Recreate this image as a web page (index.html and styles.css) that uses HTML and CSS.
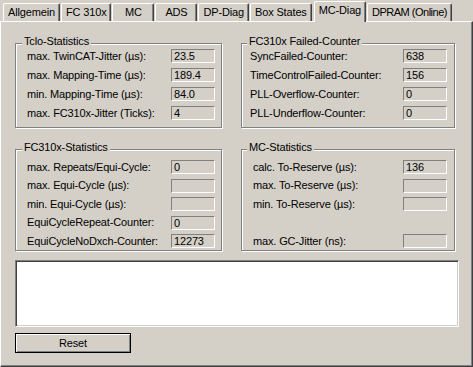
FILE: index.html
```html
<!DOCTYPE html>
<html>
<head>
<meta charset="utf-8">
<link rel="stylesheet" href="styles.css">
</head>
<body>
<div class="dlg">
  <div class="tabs">
    <div class="tab">Allgemein</div>
    <div class="tab">FC 310x</div>
    <div class="tab">MC</div>
    <div class="tab">ADS</div>
    <div class="tab">DP-Diag</div>
    <div class="tab">Box States</div>
    <div class="tab tab-sel">MC-Diag</div>
    <div class="tab tab-last">DPRAM (Online)</div>
  </div>
  <div class="panel">
    <div class="groups">
      <div class="group g-tl">
        <span class="gtitle">Tclo-Statistics</span>
        <div class="rows">
          <span class="lbl">max. TwinCAT-Jitter (µs):</span><span class="fld">23.5</span>
          <span class="lbl">max. Mapping-Time (µs):</span><span class="fld">189.4</span>
          <span class="lbl">min. Mapping-Time (µs):</span><span class="fld">84.0</span>
          <span class="lbl">max. FC310x-Jitter (Ticks):</span><span class="fld">4</span>
        </div>
      </div>
      <div class="group g-tr">
        <span class="gtitle">FC310x Failed-Counter</span>
        <div class="rows">
          <span class="lbl">SyncFailed-Counter:</span><span class="fld">638</span>
          <span class="lbl">TimeControlFailed-Counter:</span><span class="fld">156</span>
          <span class="lbl">PLL-Overflow-Counter:</span><span class="fld">0</span>
          <span class="lbl">PLL-Underflow-Counter:</span><span class="fld">0</span>
        </div>
      </div>
      <div class="group g-bl">
        <span class="gtitle">FC310x-Statistics</span>
        <div class="rows rows-b">
          <span class="lbl">max. Repeats/Equi-Cycle:</span><span class="fld">0</span>
          <span class="lbl">max. Equi-Cycle (µs):</span><span class="fld"></span>
          <span class="lbl">min. Equi-Cycle (µs):</span><span class="fld"></span>
          <span class="lbl">EquiCycleRepeat-Counter:</span><span class="fld">0</span>
          <span class="lbl">EquiCycleNoDxch-Counter:</span><span class="fld">12273</span>
        </div>
      </div>
      <div class="group g-br">
        <span class="gtitle">MC-Statistics</span>
        <div class="rows rows-b">
          <span class="lbl">calc. To-Reserve (µs):</span><span class="fld">136</span>
          <span class="lbl">max. To-Reserve (µs):</span><span class="fld"></span>
          <span class="lbl">min. To-Reserve (µs):</span><span class="fld"></span>
          <span class="lbl"></span><span></span>
          <span class="lbl">max. GC-Jitter (ns):</span><span class="fld"></span>
        </div>
      </div>
    </div>
    <div class="log"></div>
    <button class="btn">Reset</button>
  </div>
</div>
</body>
</html>
```

FILE: styles.css
```css
html, body {
  margin: 0;
  padding: 0;
  background: #d4d0c8;
}
body {
  font-family: "Liberation Sans", Arial, sans-serif;
  font-size: 11px;
  letter-spacing: -0.15px;
  color: #000;
  line-height: 13px;
}
.dlg {
  width: 473px;
  height: 367px;
}
.tabs {
  display: flex;
  align-items: flex-end;
  height: 21px;
  padding-left: 3px;
}
.tab {
  box-sizing: border-box;
  height: 18px;
  padding: 2px 4px 0;
  min-width: 42px;
  margin-right: 1px;
  text-align: center;
  white-space: nowrap;
  border-top: 1px solid #fff;
  border-left: 1px solid #fff;
  border-right: 1px solid #404040;
  box-shadow: inset -1px 0 #808080;
  border-radius: 2px 2px 0 0;
  background: #d4d0c8;
}
.tab-sel {
  height: 21px;
  margin-bottom: -1px;
  margin-left: 1px;
  padding: 2px 4px 0;
  position: relative;
  z-index: 1;
}
.tab-last {
  letter-spacing: -0.5px;
}
.panel {
  box-sizing: border-box;
  width: 473px;
  height: 346px;
  border: 1px solid;
  border-color: #fff #404040 #404040 #fff;
  box-shadow: inset -1px -1px #808080;
  padding: 21px 0 0 14px;
}
.groups {
  display: grid;
  grid-template-columns: 207px 214px;
  grid-template-rows: 85px 102px;
  column-gap: 19px;
  row-gap: 21px;
}
.group {
  position: relative;
  box-sizing: border-box;
  border: 1px solid #808080;
  box-shadow: inset 1px 1px #fff, 1px 1px #fff;
}
.gtitle {
  position: absolute;
  top: -9px;
  left: 6px;
  padding: 0 2px;
  background: #d4d0c8;
  white-space: nowrap;
}
.g-tr .gtitle,
.g-br .gtitle {
  left: 5px;
}
.rows {
  display: grid;
  grid-template-columns: 1fr 44px;
  grid-auto-rows: 14px;
  row-gap: 5px;
  align-items: center;
}
.rows-b {
  row-gap: 4.5px;
}
.g-tl { padding: 5px 6px 0 11px; }
.g-tr { padding: 5px 7px 0 8px; }
.g-bl { padding: 10px 6px 0 11px; }
.g-br { padding: 10px 7px 0 11px; }
.lbl {
  white-space: nowrap;
}
.fld {
  box-sizing: border-box;
  height: 14px;
  border-top: 1px solid #808080;
  border-left: 1px solid #808080;
  border-bottom: 1px solid #fff;
  border-right: 1px solid #fff;
  padding-left: 2px;
  line-height: 12px;
}
.log {
  box-sizing: border-box;
  width: 444px;
  height: 67px;
  margin-top: 9px;
  background: #fff;
  border: 1px solid;
  border-color: #808080 #fff #fff #808080;
  box-shadow: inset 1px 1px #404040, inset -1px -1px #d4d0c8;
}
.btn {
  display: block;
  box-sizing: border-box;
  width: 116px;
  height: 20px;
  margin: 6px 0 0;
  padding: 0;
  appearance: none;
  background: #d4d0c8;
  border: 1px solid #000;
  box-shadow: inset 1px 1px #fff, inset -1px -1px #808080;
  font: inherit;
  letter-spacing: inherit;
  color: #000;
  text-align: center;
}
```
